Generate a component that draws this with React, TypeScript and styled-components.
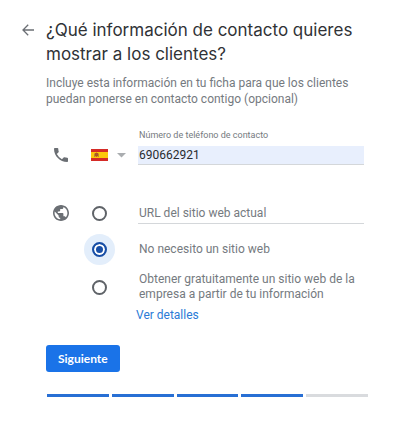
import React, { useState } from "react";
import styled, { createGlobalStyle } from "styled-components";

const GlobalStyle = createGlobalStyle`
  * { box-sizing: border-box; }
  body {
    margin: 0;
    background: #fff;
    color: #757a80;
    font-family: Roboto, "Liberation Sans", sans-serif;
    font-size: 12px;
  }
  button, input, select { font: inherit; margin: 0; }
`;

const Page = styled.main`
  display: grid;
  grid-template-columns: 30px 1fr;
  padding: 18px 38px 31px 16px;
`;

const BackButton = styled.button`
  display: flex;
  width: 14px;
  height: 24px;
  margin-left: 6px;
  padding: 0;
  align-items: center;
  border: 0;
  background: none;
  color: #6b6f74;
  cursor: pointer;
`;

const Title = styled.h1`
  margin: 0;
  color: #303236;
  font-family: Inter, "Liberation Sans", sans-serif;
  font-size: 17px;
  font-weight: 400;
  line-height: 24px;
`;

const Description = styled.p`
  margin: 9px 0 0;
  line-height: 16px;
`;

const Form = styled.form`
  grid-column: 2;
`;

const Row = styled.div<{ $height: number }>`
  display: grid;
  grid-template-columns: 30px 62px 1fr;
  align-items: center;
  min-height: ${(p) => p.$height}px;
  padding-right: 4px;
`;

const PhoneRow = styled(Row)`
  margin: 20px 0 30px;
`;

const IconCell = styled.span`
  display: flex;
  justify-content: center;
  color: #6b6f74;
`;

const CountryPicker = styled.div`
  position: relative;
  display: flex;
  align-items: center;
  gap: 9px;
  height: 20px;
  padding-left: 15px;
`;

const CountrySelect = styled.select`
  position: absolute;
  inset: 0;
  width: 52px;
  opacity: 0;
  cursor: pointer;
`;

const PhoneLabel = styled.label`
  display: block;
  grid-column: 3;
  padding: 0 0 2px 1px;
  font-size: 9px;
  line-height: 16px;
`;

const TextInput = styled.input<{ $filled?: boolean }>`
  display: block;
  width: 100%;
  min-width: 0;
  height: ${(p) => (p.$filled ? 19 : 21)}px;
  padding: 0 0 0 1px;
  border: 0;
  border-bottom: 1px solid #d4d7da;
  border-radius: 0;
  outline: 0;
  background: ${(p) => (p.$filled ? "#e8effd" : "transparent")};
  color: #282b30;
  &::placeholder { color: #757a80; opacity: 1; }
`;

const Radio = styled.input`
  appearance: none;
  width: 15px;
  height: 15px;
  margin-left: 16px;
  border: 2px solid #5f6368;
  border-radius: 50%;
  cursor: pointer;
  &:checked {
    border-color: #174ea6;
    background: #174ea6;
    box-shadow: inset 0 0 0 2px #fff, 0 0 0 8px #e3eefb;
  }
`;

const OptionLabel = styled.label`
  grid-column: 3;
  padding-left: 1px;
  line-height: 15px;
`;

const DetailsLink = styled.a`
  display: block;
  width: max-content;
  margin-left: 90px;
  color: #2b7bd6;
  line-height: 16px;
  text-decoration: none;
`;

const NextButton = styled.button`
  display: block;
  height: 27px;
  margin-top: 22px;
  padding: 0 12px;
  border: 0;
  border-radius: 3px;
  background: #1a73e8;
  color: #fff;
  font-family: Lato, "Liberation Sans", sans-serif;
  font-weight: 700;
  cursor: pointer;
`;

const Progress = styled.div`
  display: flex;
  gap: 3px;
  margin: 22px 0 0 1px;
`;

const Step = styled.span<{ $done: boolean }>`
  flex: 1;
  height: 3px;
  background: ${(p) => (p.$done ? "#286fd4" : "#d9dbde")};
`;

const BackIcon = () => (
  <svg width="12" height="12" viewBox="0 0 12 12" fill="none" stroke="currentColor" strokeWidth="1.3" aria-hidden="true">
    <path d="M12 6H1M6.2 0.8 1 6l5.2 5.2" />
  </svg>
);

const PhoneIcon = () => (
  <svg width="14" height="14" viewBox="3 3 18 18" fill="currentColor" aria-hidden="true">
    <path d="M6.62 10.79a15.15 15.15 0 0 0 6.59 6.59l2.2-2.2c.27-.27.67-.36 1.02-.24 1.12.37 2.33.57 3.57.57.55 0 1 .45 1 1V20c0 .55-.45 1-1 1C10.61 21 3 13.39 3 4c0-.55.45-1 1-1h3.5c.55 0 1 .45 1 1 0 1.25.2 2.45.57 3.57.11.35.03.74-.25 1.02z" />
  </svg>
);

const GlobeIcon = () => (
  <svg width="16" height="16" viewBox="2 2 20 20" fill="currentColor" aria-hidden="true">
    <path d="M12 2C6.48 2 2 6.48 2 12s4.48 10 10 10 10-4.48 10-10S17.52 2 12 2zm-1 17.93c-3.95-.49-7-3.85-7-7.93 0-.62.08-1.21.21-1.79L9 15v1c0 1.1.9 2 2 2v1.93zm6.9-2.54c-.26-.81-1-1.39-1.9-1.39h-1v-3c0-.55-.45-1-1-1H8v-2h2c.55 0 1-.45 1-1V7h2c1.1 0 2-.9 2-2v-.41c2.93 1.19 5 4.06 5 7.41 0 2.08-.8 3.97-2.1 5.39z" />
  </svg>
);

const SpainFlag = () => (
  <svg width="17" height="12" viewBox="0 0 17 12" aria-hidden="true">
    <path fill="#d52b27" d="M0 0h17v12H0z" />
    <path fill="#fdc90c" d="M0 3h17v6H0z" />
    <path fill="#b4551f" d="M4 4h1l.5-.7L6 4h1v3l-1.5 1L4 7z" />
    <path fill="#8b6840" d="M3.2 4.5h.6V8h-.6zM7.2 4.5h.6V8h-.6zM5 5h1v1H5z" />
  </svg>
);

const Caret = () => (
  <svg width="9" height="5" viewBox="0 0 9 5" fill="#aaadb0" aria-hidden="true">
    <path d="M0 0h9L4.5 4.5z" />
  </svg>
);

export default function App() {
  const [phone, setPhone] = useState("690662921");
  const [url, setUrl] = useState("");
  const [choice, setChoice] = useState("none");

  const radio = (value: string) => ({
    type: "radio",
    name: "website",
    id: `website-${value}`,
    checked: choice === value,
    onChange: () => setChoice(value),
  });

  return (
    <>
      <GlobalStyle />
      <Page>
        <BackButton type="button" aria-label="Atrás"><BackIcon /></BackButton>
        <header>
          <Title>¿Qué información de contacto quieres mostrar a los clientes?</Title>
          <Description>Incluye esta información en tu ficha para que los clientes puedan ponerse en contacto contigo (opcional)</Description>
        </header>
        <Form onSubmit={(e) => e.preventDefault()}>
          <PhoneRow $height={38}>
            <PhoneLabel htmlFor="phone">Número de teléfono de contacto</PhoneLabel>
            <IconCell><PhoneIcon /></IconCell>
            <CountryPicker>
              <SpainFlag />
              <Caret />
              <CountrySelect aria-label="País" defaultValue="ES">
                <option value="ES">España</option>
              </CountrySelect>
            </CountryPicker>
            <TextInput $filled id="phone" type="tel" value={phone} onChange={(e) => setPhone(e.target.value)} />
          </PhoneRow>

          <Row $height={36}>
            <IconCell><GlobeIcon /></IconCell>
            <Radio {...radio("current")} aria-label="URL del sitio web actual" />
            <TextInput type="url" aria-label="URL del sitio web actual" placeholder="URL del sitio web actual" value={url} onChange={(e) => setUrl(e.target.value)} />
          </Row>
          <Row $height={36}>
            <IconCell />
            <Radio {...radio("none")} />
            <OptionLabel htmlFor="website-none">No necesito un sitio web</OptionLabel>
          </Row>
          <Row $height={40}>
            <IconCell />
            <Radio {...radio("free")} />
            <OptionLabel htmlFor="website-free">Obtener gratuitamente un sitio web de la empresa a partir de tu información</OptionLabel>
          </Row>
          <DetailsLink href="#detalles">Ver detalles</DetailsLink>
          <NextButton type="submit">Siguiente</NextButton>
          <Progress role="progressbar" aria-label="Progreso" aria-valuemin={0} aria-valuemax={5} aria-valuenow={4}>
            {[1, 2, 3, 4, 5].map((step) => <Step key={step} $done={step <= 4} />)}
          </Progress>
        </Form>
      </Page>
    </>
  );
}
